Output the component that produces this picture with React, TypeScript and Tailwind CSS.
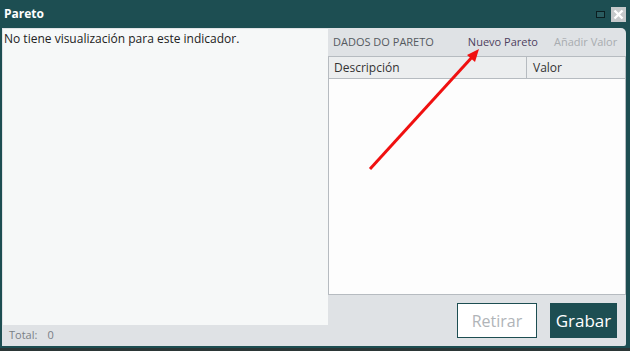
import React from 'react';

export default function App() {
    return (
        <div className="w-[630px] h-[351px] bg-[#1d4e52] flex flex-col overflow-hidden" style={{ fontFamily: '"Open Sans", sans-serif' }}>
            {/* Title bar */}
            <div className="h-[28px] flex items-center justify-between pl-[4px] pr-[4px]">
                <span className="text-[12px] font-bold text-white leading-none">Pareto</span>
                <div className="flex items-center gap-[6px]">
                    <div className="w-[9px] h-[7px] border border-[#0b1e20] bg-[#2a5c60] mt-[1px]"></div>
                    <div className="w-[15px] h-[15px] bg-[#c6c9cb] flex items-center justify-center">
                        <svg width="11" height="11" viewBox="0 0 11 11">
                            <path d="M1.5 1.5 L9.5 9.5 M9.5 1.5 L1.5 9.5" stroke="white" strokeWidth="2.4" />
                        </svg>
                    </div>
                </div>
            </div>

            {/* Content */}
            <div className="ml-[2px] mr-[4px] h-[318px] bg-[#dfe2e5] rounded-tr-[5px] rounded-br-[2px] flex">
                {/* Left: chart area */}
                <div className="w-[326px] flex flex-col">
                    <div className="flex-1 bg-[#f6f8f8] ml-[1px] mt-[1px] px-[1px] pt-[2px]">
                        <p className="text-[12px] text-[#222] leading-[16px]">No tiene visualización para este indicador.</p>
                    </div>
                    <div className="h-[21px] flex items-center pl-[7px] text-[11px] text-[#7a7f85]">
                        <span>Total:</span>
                        <span className="ml-[10px]">0</span>
                    </div>
                </div>

                {/* Right: data */}
                <div className="flex-1 flex flex-col relative">
                    <div className="h-[28px] flex items-center pl-[5px] text-[11px]">
                        <span className="text-[#555a5f]">DADOS DO PARETO</span>
                        <span className="ml-[34px] text-[#4e3f5e]">Nuevo Pareto</span>
                        <span className="ml-[16px] text-[#a8acb0]">Añadir Valor</span>
                    </div>
                    <div className="h-[239px] border border-[#b6bbc0] bg-[#fdfdfd] flex flex-col">
                        <div className="h-[22px] bg-[#eceeef] border-b border-[#b6bbc0] flex text-[12px] text-[#333]">
                            <div className="w-[198px] border-r border-[#b6bbc0] flex items-center pl-[5px]">Descripción</div>
                            <div className="flex-1 flex items-center pl-[6px]">Valor</div>
                        </div>
                    </div>
                    <div className="flex-1 flex items-start justify-end pt-[8px] pr-[9px] gap-[13px]">
                        <button className="w-[80px] h-[35px] bg-white border border-[#1d4e52] text-[16px] text-[#b0b4b8]">Retirar</button>
                        <button className="w-[67px] h-[35px] bg-[#1d4e52] text-[17px] text-white">Grabar</button>
                    </div>

                    {/* Red annotation arrow */}
                    <svg className="absolute left-0 top-0 pointer-events-none" width="300" height="318" viewBox="0 0 300 318">
                        <line x1="42" y1="141" x2="146" y2="27" stroke="#f01010" strokeWidth="3" />
                        <polygon points="151,21 139,27 147,34" fill="#f01010" />
                    </svg>
                </div>
            </div>
            <div className="flex-1 bg-[#2b3636] border-t-[2px] border-[#1d4e52]"></div>
        </div>
    );
}
